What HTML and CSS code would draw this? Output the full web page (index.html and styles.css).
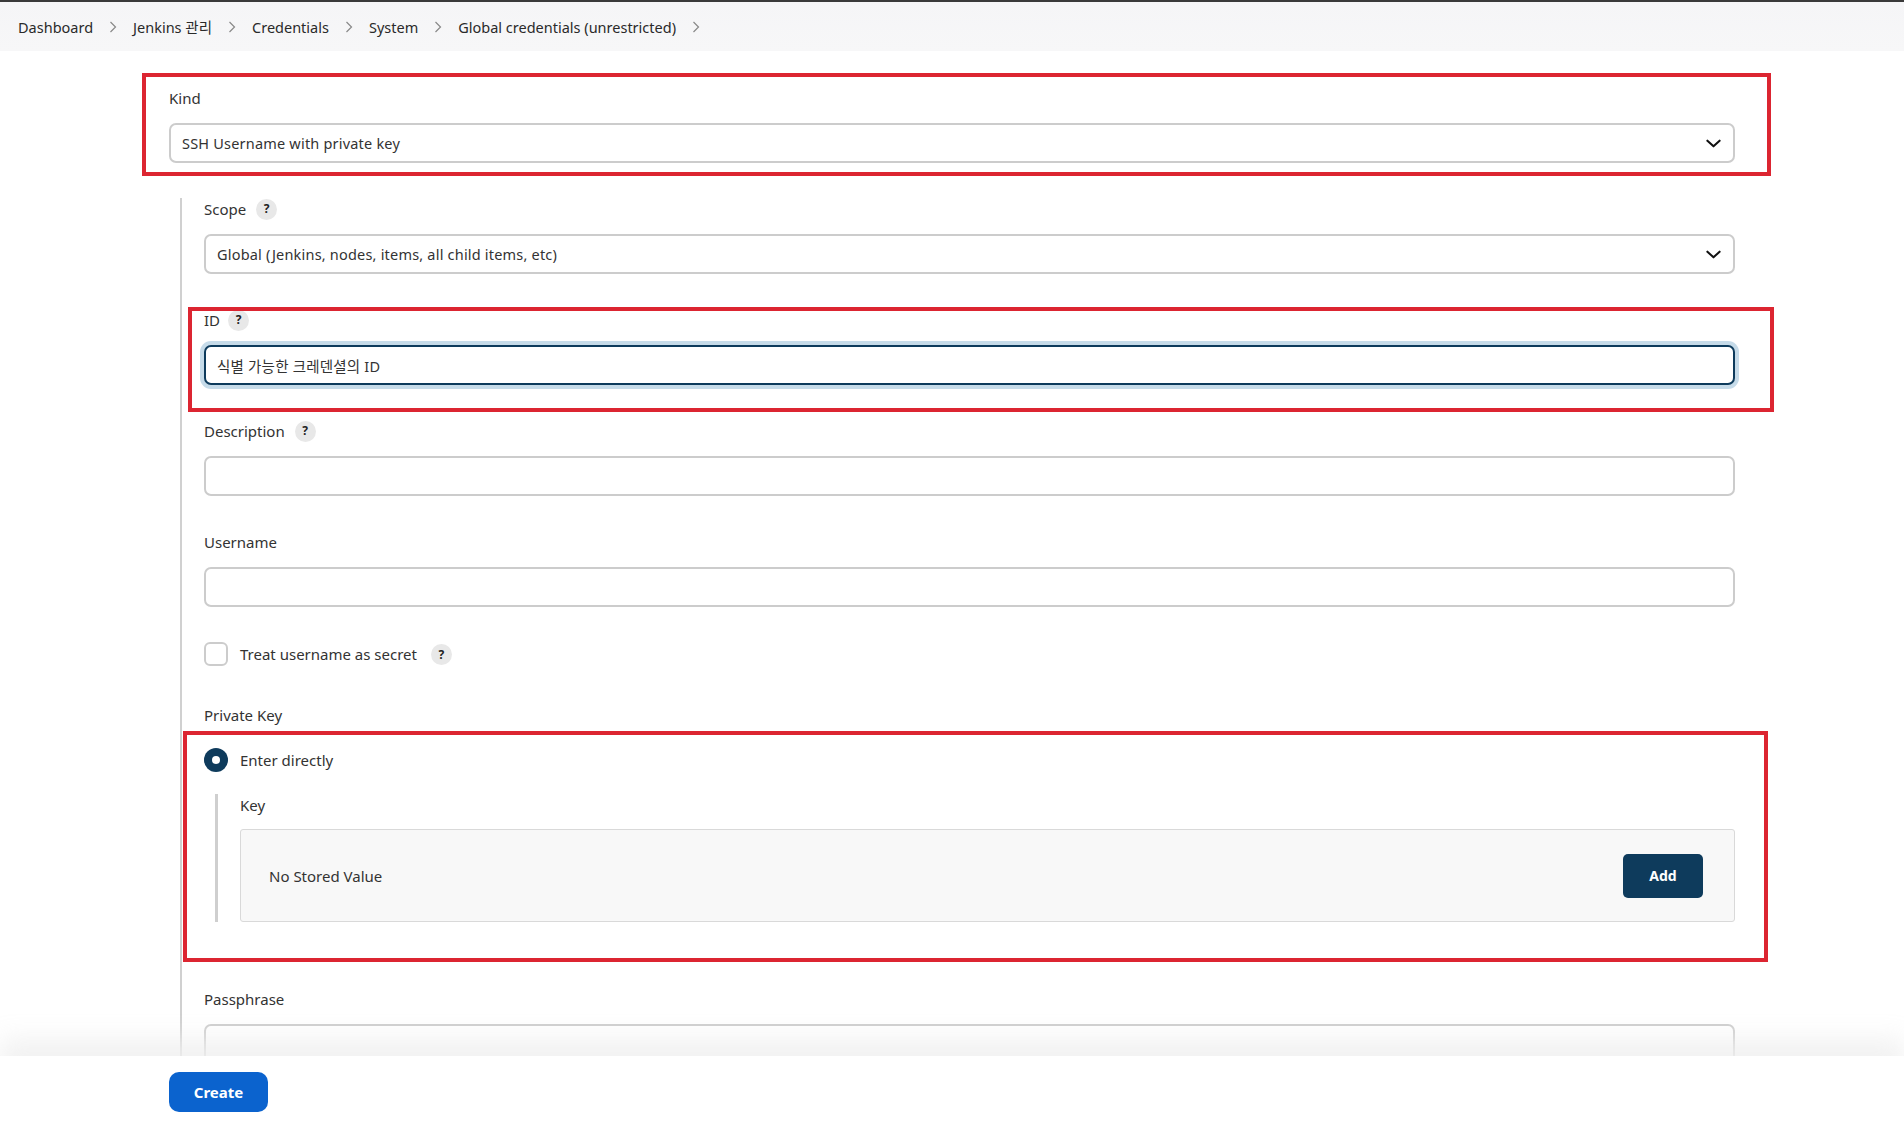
FILE: index.html
```html
<!DOCTYPE html>
<html lang="ko">
<head>
  <meta charset="UTF-8" />
  <title>New credentials [Jenkins]</title>
  <link rel="stylesheet" href="styles.css">
</head>
<body>
  <div class="breadcrumbs">
    <a>Dashboard</a>
    <svg class="sep" viewBox="0 0 8 12"><polyline points="1.5,1 6.5,6 1.5,11" /></svg>
    <a>Jenkins 관리</a>
    <svg class="sep" viewBox="0 0 8 12"><polyline points="1.5,1 6.5,6 1.5,11" /></svg>
    <a>Credentials</a>
    <svg class="sep" viewBox="0 0 8 12"><polyline points="1.5,1 6.5,6 1.5,11" /></svg>
    <a>System</a>
    <svg class="sep" viewBox="0 0 8 12"><polyline points="1.5,1 6.5,6 1.5,11" /></svg>
    <a>Global credentials (unrestricted)</a>
    <svg class="sep" viewBox="0 0 8 12"><polyline points="1.5,1 6.5,6 1.5,11" /></svg>
  </div>

  <main class="page">
    <div class="field mark mark-kind">
      <div class="label">Kind</div>
      <div class="select">
        <span>SSH Username with private key</span>
        <svg class="chevron" viewBox="0 0 16 9"><polyline points="1.5,1.5 8,7.5 14.5,1.5" /></svg>
      </div>
    </div>

    <div class="nested">
      <div class="field">
        <div class="label">Scope <span class="help">?</span></div>
        <div class="select">
          <span>Global (Jenkins, nodes, items, all child items, etc)</span>
          <svg class="chevron" viewBox="0 0 16 9"><polyline points="1.5,1.5 8,7.5 14.5,1.5" /></svg>
        </div>
      </div>

      <div class="field mark mark-id">
        <div class="label">ID <span class="help help-tight">?</span></div>
        <div class="input focused">식별 가능한 크레덴셜의 ID</div>
      </div>

      <div class="field">
        <div class="label">Description <span class="help">?</span></div>
        <div class="input"></div>
      </div>

      <div class="field">
        <div class="label">Username</div>
        <div class="input"></div>
      </div>

      <div class="check-row">
        <span class="checkbox"></span>
        <span>Treat username as secret</span>
        <span class="help">?</span>
      </div>

      <div class="label">Private Key</div>
      <div class="key-group mark mark-key">
        <div class="radio-row">
          <span class="radio"></span>
          <span>Enter directly</span>
        </div>
        <div class="sub">
          <div class="label">Key</div>
          <div class="secret-box">
            <span>No Stored Value</span>
            <button class="btn-add">Add</button>
          </div>
        </div>
      </div>

      <div class="field">
        <div class="label">Passphrase</div>
        <div class="input"></div>
      </div>
    </div>
  </main>

  <div class="bottom-bar">
    <button class="btn-create">Create</button>
  </div>
</body>
</html>
```

FILE: styles.css
```css
:root {
  --text: #333;
  --border: #ccc;
  --navy: #0e3b5c;
  --blue: #0b63ce;
  --mark: #dc2531;
}

* {
  box-sizing: border-box;
}

body {
  margin: 0;
  font-family: "Noto Sans", "Noto Sans CJK KR", sans-serif;
  font-size: 15px;
  color: var(--text);
  background: #fff;
  border-top: 2px solid #3a3a3a;
}

.breadcrumbs {
  height: 49px;
  display: flex;
  align-items: center;
  padding-left: 18px;
  background: linear-gradient(#f5f5f7, #f7f7f8);
  font-size: 14.5px;
}

.breadcrumbs a {
  color: #2a2a2a;
}

.sep {
  width: 8px;
  height: 12px;
  margin: 0 16px;
  fill: none;
  stroke: #888;
  stroke-width: 1.2;
}

.page {
  padding: 36px 169px 20px;
}

.field {
  margin-bottom: 35px;
}

.label {
  display: flex;
  align-items: center;
  height: 22px;
  line-height: 22px;
  margin-bottom: 14px;
}

.help {
  display: inline-flex;
  align-items: center;
  justify-content: center;
  width: 21px;
  height: 21px;
  margin-left: 10px;
  border-radius: 50%;
  background: #e8e8e8;
  color: #222;
  font-size: 12px;
  font-weight: 700;
}

.help-tight {
  margin-left: 8px;
}

.select,
.input {
  display: flex;
  align-items: center;
  justify-content: space-between;
  height: 40px;
  padding: 0 11px;
  border: 2px solid var(--border);
  border-radius: 7px;
  background: #fff;
  font-size: 14.5px;
  letter-spacing: 0.2px;
}

.input.focused {
  border-color: var(--navy);
  box-shadow: 0 0 0 4px #c6dbe9;
}

.chevron {
  width: 15px;
  height: 9px;
  margin-right: 1px;
  fill: none;
  stroke: #111;
  stroke-width: 2.2;
  stroke-linecap: round;
  stroke-linejoin: round;
}

.nested {
  margin-left: 11px;
  padding-left: 22px;
  border-left: 2px solid #d0d0d0;
}

.check-row,
.radio-row {
  display: flex;
  align-items: center;
  height: 24px;
  gap: 12px;
}

.check-row {
  margin-bottom: 38px;
}

.check-row .help {
  margin-left: 2px;
}

.checkbox {
  width: 24px;
  height: 24px;
  border: 2px solid var(--border);
  border-radius: 6px;
}

.radio {
  position: relative;
  width: 24px;
  height: 24px;
  border-radius: 50%;
  background: var(--navy);
}

.radio::after {
  content: "";
  position: absolute;
  left: 8px;
  top: 8px;
  width: 8px;
  height: 8px;
  border-radius: 50%;
  background: #fff;
}

.key-group {
  margin-top: 22px;
  margin-bottom: 66px;
}

.sub {
  margin-top: 22px;
  margin-left: 11px;
  padding-left: 22px;
  border-left: 3px solid #cfcfcf;
}

.sub .label {
  margin-bottom: 13px;
}

.secret-box {
  display: flex;
  align-items: center;
  justify-content: space-between;
  height: 93px;
  padding: 0 31px 0 28px;
  border: 1px solid #d9d9d9;
  border-radius: 3px;
  background: #f8f8f8;
}

.btn-add {
  width: 80px;
  height: 44px;
  border: none;
  border-radius: 5px;
  background: var(--navy);
  color: #fff;
  font-family: inherit;
  font-size: 14px;
  font-weight: 700;
}

/* red annotation frames drawn over the form */
.mark {
  position: relative;
}

.mark::after {
  content: "";
  position: absolute;
  border: 4px solid var(--mark);
  pointer-events: none;
}

.mark-kind::after {
  top: -14px;
  bottom: -13px;
  left: -27px;
  right: -36px;
}

.mark-id::after {
  top: -2px;
  bottom: -27px;
  left: -16px;
  right: -39px;
}

.mark-key::after {
  top: -17px;
  bottom: -40px;
  left: -21px;
  right: -33px;
}

.bottom-bar {
  position: fixed;
  left: 0;
  right: 0;
  bottom: 0;
  height: 68px;
  padding: 16px 169px 0;
  background: #fff;
  box-shadow: 0 -18px 24px rgba(240, 240, 240, 0.85);
}

.btn-create {
  width: 99px;
  height: 40px;
  border: none;
  border-radius: 10px;
  background: var(--blue);
  color: #fff;
  font-family: inherit;
  font-size: 15px;
  font-weight: 700;
}
```
